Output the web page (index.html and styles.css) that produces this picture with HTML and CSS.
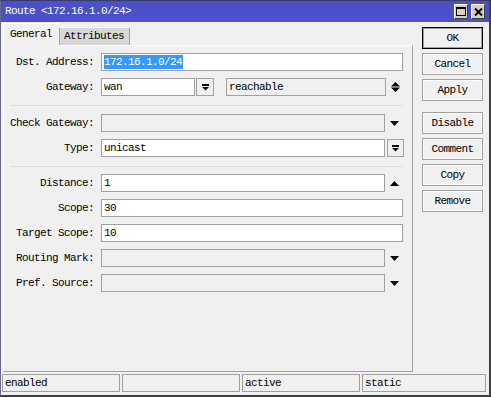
FILE: index.html
```html
<!DOCTYPE html>
<html>
<head>
<meta charset="utf-8">
<link rel="stylesheet" href="styles.css">
</head>
<body>
<div class="window">
  <div class="titlebar">
    <span class="title">Route &lt;172.16.1.0/24&gt;</span>
    <div class="tbtns">
      <span class="tbtn"><svg width="10" height="9" viewBox="0 0 10 9"><rect x="0.5" y="0.5" width="9" height="8" fill="none" stroke="#000"/><rect x="0" y="0" width="10" height="2" fill="#000"/></svg></span>
      <span class="tbtn"><svg width="9" height="8" viewBox="0 0 9 8"><path d="M1 0.5 L8 7.5 M8 0.5 L1 7.5" stroke="#000" stroke-width="2" fill="none"/></svg></span>
    </div>
  </div>
  <div class="body">
    <div class="main">
      <div class="tabs">
        <div class="tab active">General</div>
        <div class="tab">Attributes</div>
      </div>
      <div class="panel">
        <div class="row">
          <label class="lbl">Dst. Address:</label>
          <div class="inp full"><span class="sel">172.16.1.0/24</span></div>
        </div>
        <div class="row">
          <label class="lbl">Gateway:</label>
          <div class="inp gw">wan</div>
          <span class="ddbtn"><svg width="9" height="7" viewBox="0 0 9 7"><rect x="1" y="0" width="7" height="2" fill="#000"/><polygon points="1,3 8,3 4.5,6.5" fill="#000"/></svg></span>
          <div class="inp ro reach">reachable</div>
          <span class="slot"><svg width="9" height="10" viewBox="0 0 9 10"><polygon points="4.5,0 9,4.5 0,4.5" fill="#000"/><polygon points="0,5.5 9,5.5 4.5,10" fill="#000"/></svg></span>
        </div>
        <div class="sep first"></div>
        <div class="row">
          <label class="lbl">Check Gateway:</label>
          <div class="inp ro short"></div>
          <span class="slot"><svg width="9" height="5" viewBox="0 0 9 5"><polygon points="0,0 9,0 4.5,5" fill="#000"/></svg></span>
        </div>
        <div class="row">
          <label class="lbl">Type:</label>
          <div class="inp short">unicast</div>
          <span class="ddbtn wide"><svg width="9" height="7" viewBox="0 0 9 7"><rect x="1" y="0" width="7" height="2" fill="#000"/><polygon points="1,3 8,3 4.5,6.5" fill="#000"/></svg></span>
        </div>
        <div class="sep"></div>
        <div class="row">
          <label class="lbl">Distance:</label>
          <div class="inp short">1</div>
          <span class="slot"><svg width="9" height="5" viewBox="0 0 9 5"><polygon points="4.5,0 9,5 0,5" fill="#000"/></svg></span>
        </div>
        <div class="row">
          <label class="lbl">Scope:</label>
          <div class="inp full">30</div>
        </div>
        <div class="row">
          <label class="lbl">Target Scope:</label>
          <div class="inp full">10</div>
        </div>
        <div class="row">
          <label class="lbl">Routing Mark:</label>
          <div class="inp ro short"></div>
          <span class="slot"><svg width="9" height="5" viewBox="0 0 9 5"><polygon points="0,0 9,0 4.5,5" fill="#000"/></svg></span>
        </div>
        <div class="row">
          <label class="lbl">Pref. Source:</label>
          <div class="inp ro short"></div>
          <span class="slot"><svg width="9" height="5" viewBox="0 0 9 5"><polygon points="0,0 9,0 4.5,5" fill="#000"/></svg></span>
        </div>
      </div>
    </div>
    <div class="buttons">
      <div class="btn default">OK</div>
      <div class="btn">Cancel</div>
      <div class="btn">Apply</div>
      <div class="btn grp">Disable</div>
      <div class="btn">Comment</div>
      <div class="btn">Copy</div>
      <div class="btn">Remove</div>
    </div>
  </div>
  <div class="status">
    <div class="cell">enabled</div>
    <div class="cell"></div>
    <div class="cell">active</div>
    <div class="cell last">static</div>
  </div>
</div>
</body>
</html>
```
FILE: styles.css
```css
* { box-sizing: border-box; }
html, body { margin: 0; padding: 0; background: #f0f0f0; }
body {
  font-family: "Liberation Mono", "DejaVu Sans Mono", monospace;
  font-size: 11px;
  letter-spacing: -0.6px;
  color: #000;
}
.window {
  width: 491px;
  height: 397px;
  display: flex;
  flex-direction: column;
  background: #f0f0f0;
  border-top: 1px solid #3a3a6a;
  border-left: 1px solid #6a6a8a;
  border-right: 2px solid #404040;
  border-bottom: 2px solid #404040;
}
.titlebar {
  height: 21px;
  background: #4b50c8;
  display: flex;
  align-items: center;
  justify-content: space-between;
  padding: 0 4px 0 4px;
  flex: none;
}
.title { color: #fff; line-height: 21px; }
.tbtns { display: flex; gap: 3px; }
.tbtn {
  width: 14px;
  height: 15px;
  background: #d4d0c8;
  border-top: 1px solid #fff;
  border-left: 1px solid #fff;
  border-right: 1px solid #404040;
  border-bottom: 1px solid #404040;
  display: flex;
  align-items: center;
  justify-content: center;
}
.body {
  height: 350px;
  display: flex;
  padding-left: 2px;
  flex: none;
}
.main {
  width: 410px;
  padding-top: 1px;
  display: flex;
  flex-direction: column;
}
.tabs {
  height: 22px;
  display: flex;
  align-items: flex-end;
  position: relative;
  z-index: 1;
}
.tab {
  height: 18px;
  line-height: 16px;
  background: #d8d8d8;
  border-top: 1px solid #fff;
  border-right: 1px solid #a0a0a0;
  border-left: 1px solid #a0a0a0;
  padding-left: 4px;
  width: 71px;
}
.tab.active {
  height: 23px;
  margin-bottom: -1px;
  width: 56px;
  background: #f0f0f0;
  border-left: 1px solid #fff;
  border-right: none;
  padding-left: 6px;
  line-height: 20px;
}
.panel {
  height: 327px;
  border-top: 1px solid #fff;
  border-left: 1px solid #fff;
  border-right: 1px solid #a0a0a0;
  border-bottom: 1px solid #a0a0a0;
  padding: 7px 0 0 0;
  display: flex;
  flex-direction: column;
  gap: 7px;
}
.row {
  display: flex;
  align-items: center;
  height: 18px;
}
.lbl {
  width: 90px;
  text-align: right;
  margin-right: 7px;
  white-space: nowrap;
}
.inp {
  height: 18px;
  background: #fff;
  border: 1px solid #a0a0a0;
  line-height: 16px;
  padding-left: 2px;
  white-space: nowrap;
  overflow: hidden;
}
.inp.ro { background: #f0f0f0; }
.inp.full { width: 302px; }
.inp.short { width: 284px; }
.inp.gw { width: 94px; }
.inp.reach { width: 160px; margin-left: 12px; }
.sel {
  background: #3399ff;
  color: #fff;
  display: inline-block;
  line-height: 14px;
  padding-right: 1px;
}
.ddbtn {
  width: 18px;
  height: 18px;
  margin-left: 1px;
  border: 1px solid #a0a0a0;
  background: #f0f0f0;
  display: flex;
  align-items: center;
  justify-content: center;
}
.ddbtn.wide { width: 17px; margin-left: 2px; }
.slot {
  width: 18px;
  height: 18px;
  display: flex;
  align-items: center;
  justify-content: center;
}
.sep {
  height: 1px;
  background: #dcdcdc;
  margin: 2px 8px 0 6px;
  width: 393px;
}
.sep.first { margin-bottom: 1px; }
.buttons {
  margin-left: 9px;
  width: 61px;
  padding-top: 5px;
  display: flex;
  flex-direction: column;
  gap: 4px;
}
.btn {
  height: 22px;
  border: 1px solid #a0a0a0;
  box-shadow: inset 0 0 0 1px #fdfdfd;
  background: #f0f0f0;
  text-align: center;
  line-height: 20px;
}
.btn.default {
  border: 1px solid #000;
  box-shadow: inset 0 0 0 1px #a0a0a0;
}
.btn.grp { margin-top: 7px; }
.status {
  height: 18px;
  margin-top: 2px;
  padding-left: 1px;
  display: flex;
  gap: 2px;
  flex: none;
}
.cell {
  width: 118px;
  height: 18px;
  border: 1px solid #a0a0a0;
  line-height: 16px;
  padding-left: 2px;
}
.cell.last { width: 124px; }
```
